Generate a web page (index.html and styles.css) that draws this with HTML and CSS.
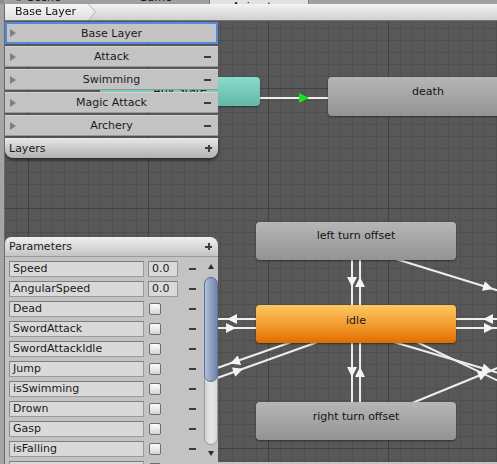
FILE: index.html
```html
<!DOCTYPE html>
<html>
<head>
<meta charset="utf-8">
<title>Animator</title>
<link rel="stylesheet" href="styles.css">
</head>
<body>
<div class="window">
  <div class="tabs">
    <div class="tab tab-scene"><span class="tab-ico">#</span>Scene</div>
    <div class="tab tab-game">Game</div>
    <div class="tab tab-active"><span class="tab-ico">&#8734;</span>Animator</div>
  </div>
  <div class="main">
    <div class="frame-left"></div>
    <div class="content">
      <div class="toolbar">
        <div class="crumb-wrap"><div class="crumb">Base Layer</div></div>
      </div>
      <div class="canvas">
        <svg class="edges" viewBox="5 21 492 443" width="492" height="443">
          <defs>
            <marker id="aw" markerUnits="userSpaceOnUse" markerWidth="11" markerHeight="10" refX="10" refY="5" orient="auto" viewBox="0 0 10 10">
              <path d="M0,0 L10,5 L0,10 Z" fill="#f4f4f4"/>
            </marker>
            <marker id="ag" markerUnits="userSpaceOnUse" markerWidth="11" markerHeight="10" refX="10" refY="5" orient="auto" viewBox="0 0 10 10">
              <path d="M0,0 L10,5 L0,10 Z" fill="#14e614"/>
            </marker>
          </defs>
          <g stroke="#ededed" stroke-width="2" fill="none">
            <line x1="240" y1="98" x2="309" y2="98" marker-end="url(#ag)"/>
            <line x1="309" y1="98" x2="340" y2="98"/>

            <line x1="352" y1="240" x2="352" y2="287" marker-end="url(#aw)"/>
            <line x1="352" y1="287" x2="352" y2="377" marker-end="url(#aw)"/>
            <line x1="352" y1="377" x2="352" y2="420"/>
            <line x1="360" y1="420" x2="360" y2="367" marker-end="url(#aw)"/>
            <line x1="360" y1="367" x2="360" y2="277" marker-end="url(#aw)"/>
            <line x1="360" y1="277" x2="360" y2="240"/>

            <line x1="300" y1="319" x2="227" y2="319" marker-end="url(#aw)"/>
            <line x1="227" y1="319" x2="150" y2="319"/>
            <line x1="150" y1="328" x2="236" y2="328" marker-end="url(#aw)"/>
            <line x1="236" y1="328" x2="300" y2="328"/>

            <line x1="520" y1="319" x2="483" y2="319" marker-end="url(#aw)"/>
            <line x1="483" y1="319" x2="400" y2="319"/>
            <line x1="400" y1="328" x2="494" y2="328" marker-end="url(#aw)"/>
            <line x1="494" y1="328" x2="520" y2="328"/>

            <line x1="370" y1="251" x2="493" y2="289" marker-end="url(#aw)"/>
            <line x1="493" y1="289" x2="530" y2="300"/>

            <line x1="330" y1="328.5" x2="230" y2="363.5" marker-end="url(#aw)"/>
            <line x1="230" y1="363.5" x2="150" y2="391.5"/>
            <line x1="150" y1="402" x2="243" y2="368.7" marker-end="url(#aw)"/>
            <line x1="243" y1="368.7" x2="340" y2="334"/>

            <line x1="380" y1="338" x2="492" y2="371" marker-end="url(#aw)"/>
            <line x1="492" y1="371" x2="530" y2="382"/>
            <line x1="400" y1="334" x2="530" y2="396"/>
            <line x1="400" y1="408" x2="488" y2="372" marker-end="url(#aw)"/>
            <line x1="488" y1="372" x2="530" y2="354"/>
          </g>
        </svg>

        <div class="node node-teal n-any">Any State</div>
        <div class="node node-gray n-death">death</div>
        <div class="node node-gray n-left">left turn offset</div>
        <div class="node node-orange n-idle">idle</div>
        <div class="node node-gray n-right">right turn offset</div>

        <div class="layers">
          <div class="lrow selected"><span class="tri"></span><span class="lname">Base Layer</span><span class="lact"></span></div>
          <div class="lrow"><span class="tri"></span><span class="lname">Attack</span><span class="lact"><span class="minus"></span></span></div>
          <div class="lrow"><span class="tri"></span><span class="lname">Swimming</span><span class="lact"><span class="minus"></span></span></div>
          <div class="lrow"><span class="tri"></span><span class="lname">Magic Attack</span><span class="lact"><span class="minus"></span></span></div>
          <div class="lrow"><span class="tri"></span><span class="lname">Archery</span><span class="lact"><span class="minus"></span></span></div>
          <div class="lfoot"><span>Layers</span><span class="plus"></span></div>
        </div>

        <div class="params">
          <div class="phead"><span>Parameters</span><span class="plus"></span></div>
          <div class="pbody">
            <div class="plist">
              <div class="prow"><div class="pname">Speed</div><div class="pcell"><div class="pval">0.0</div></div><span class="minus"></span></div>
              <div class="prow"><div class="pname">AngularSpeed</div><div class="pcell"><div class="pval">0.0</div></div><span class="minus"></span></div>
              <div class="prow"><div class="pname">Dead</div><div class="pcell"><div class="chk"></div></div><span class="minus"></span></div>
              <div class="prow"><div class="pname">SwordAttack</div><div class="pcell"><div class="chk"></div></div><span class="minus"></span></div>
              <div class="prow"><div class="pname">SwordAttackIdle</div><div class="pcell"><div class="chk"></div></div><span class="minus"></span></div>
              <div class="prow"><div class="pname">Jump</div><div class="pcell"><div class="chk"></div></div><span class="minus"></span></div>
              <div class="prow"><div class="pname">isSwimming</div><div class="pcell"><div class="chk"></div></div><span class="minus"></span></div>
              <div class="prow"><div class="pname">Drown</div><div class="pcell"><div class="chk"></div></div><span class="minus"></span></div>
              <div class="prow"><div class="pname">Gasp</div><div class="pcell"><div class="chk"></div></div><span class="minus"></span></div>
              <div class="prow"><div class="pname">isFalling</div><div class="pcell"><div class="chk"></div></div><span class="minus"></span></div>
              <div class="prow"><div class="pname">isLanding</div><div class="pcell"><div class="chk"></div></div><span class="minus"></span></div>
            </div>
            <div class="scroll">
              <div class="sarrow up"></div>
              <div class="strack"><div class="sthumb"></div></div>
              <div class="sarrow down"></div>
            </div>
          </div>
        </div>
      </div>
    </div>
  </div>
</div>
</body>
</html>
```

FILE: styles.css
```css
html, body {
  margin: 0;
  padding: 0;
  width: 497px;
  height: 464px;
  overflow: hidden;
}
body {
  font-family: "DejaVu Sans", Verdana, sans-serif;
  font-size: 11px;
  color: #1a1a1a;
  background: #a3a3a3;
}
.window {
  display: flex;
  flex-direction: column;
  width: 497px;
  height: 464px;
  overflow: hidden;
}

/* top tab strip (mostly cut off by the window edge) */
.tabs {
  height: 4px;
  flex: none;
  overflow: hidden;
  display: flex;
  background: #a0a0a0;
  border-left: 4px solid #8c8c8c;
}
.tab {
  line-height: 13px;
  margin-top: -9px;
  white-space: nowrap;
  color: #111;
}
.tab-ico { margin-right: 3px; }
.tab-scene { width: 110px; padding-left: 11px; }
.tab-game { width: 70px; padding-left: 14px; }
.tab-active {
  width: 88px;
  padding: 9px 0 0 10px;
  background: #e2e2e2;
  border-left: 1px solid #7d7d7d;
  border-right: 1px solid #7d7d7d;
}

.main {
  flex: 1;
  display: flex;
  min-height: 0;
}
.frame-left {
  width: 4px;
  flex: none;
  background: #a5a5a5;
  border-right: 1px solid #6a6a6a;
}
.content {
  flex: 1;
  display: flex;
  flex-direction: column;
  min-width: 0;
}

/* toolbar + breadcrumb */
.toolbar {
  height: 17px;
  flex: none;
  box-sizing: border-box;
  background: linear-gradient(#f4f4f4, #d0d0d0);
  border-bottom: 1px solid #777;
  display: flex;
}
.crumb-wrap {
  filter: drop-shadow(1px 0 0 #b0b0b0);
}
.crumb {
  width: 80px;
  height: 16px;
  padding-left: 10px;
  line-height: 16px;
  background: linear-gradient(#f6f6f6, #e0e0e0);
  clip-path: polygon(0 0, 83px 0, 90px 50%, 83px 100%, 0 100%);
  color: #111;
}

/* graph canvas */
.canvas {
  flex: 1;
  position: relative;
  overflow: hidden;
  display: flex;
  flex-direction: column;
  padding-top: 1px;
  background-color: #585858;
  background-image:
    linear-gradient(#c4c4c4, #c4c4c4),
    linear-gradient(to right, #414141 1px, transparent 1px),
    linear-gradient(to bottom, #414141 1px, transparent 1px),
    linear-gradient(to right, #4f4f4f 1px, transparent 1px),
    linear-gradient(to bottom, #4f4f4f 1px, transparent 1px);
  background-repeat: no-repeat, repeat, repeat, repeat, repeat;
  background-size: 100% 2px, 120px 120px, 120px 120px, 12px 12px, 12px 12px;
  background-position: 0 100%, 23px 0, 0 67px, 11px 0, 0 7px;
}
.edges {
  position: absolute;
  left: 0;
  top: 0;
}

/* state nodes */
.node {
  position: absolute;
  box-sizing: border-box;
  width: 200px;
  height: 38px;
  padding-top: 7px;
  line-height: 14px;
  text-align: center;
  border-radius: 4px;
  color: #141414;
  box-shadow: 0 1px 2px rgba(0, 0, 0, 0.45);
}
.node-gray { background: linear-gradient(#b6b6b6, #939393); }
.node-orange { background: linear-gradient(#fec860, #f29a2c 55%, #e26d00); }
.node-teal {
  background: linear-gradient(#8adbcb, #61b9a8);
  width: 160px;
  height: 29px;
  padding-top: 7px;
}
.n-any { left: 95px; top: 56px; }
.n-death { left: 323px; top: 56px; height: 39px; padding-top: 8px; }
.n-left { left: 251px; top: 201px; }
.n-idle { left: 251px; top: 284px; padding-top: 9px; }
.n-right { left: 251px; top: 381px; padding-top: 8px; }

/* layers panel */
.layers {
  position: relative;
  z-index: 2;
  width: 213px;
  flex: none;
  display: flex;
  flex-direction: column;
  gap: 2px;
}
.lrow {
  height: 21px;
  box-sizing: border-box;
  display: grid;
  grid-template-columns: 20px 1fr 20px;
  align-items: center;
  background: #c3c3c3;
  border-top: 1px solid #d4d4d4;
  border-bottom: 1px solid #979797;
}
.lrow.selected {
  height: 22px;
  border: 2px solid #5289dc;
}
.lrow.selected .tri { margin-left: 3px; }
.tri {
  width: 0;
  height: 0;
  margin-left: 5px;
  border-left: 6px solid #808080;
  border-top: 4px solid transparent;
  border-bottom: 4px solid transparent;
}
.lname { text-align: center; }
.lact { display: flex; justify-content: flex-start; }
.minus {
  display: block;
  width: 7px;
  height: 2px;
  background: #3a3a3a;
}
.lact .minus { margin-left: 6px; }
.plus {
  display: block;
  width: 7px;
  height: 7px;
  background:
    linear-gradient(#3e3e3e, #3e3e3e) center / 7px 2px no-repeat,
    linear-gradient(#3e3e3e, #3e3e3e) center / 2px 7px no-repeat;
}
.lfoot {
  height: 20px;
  box-sizing: border-box;
  display: flex;
  align-items: center;
  justify-content: space-between;
  padding: 0 6px 0 4px;
  background: linear-gradient(#e9e9e9, #c6c6c6 60%, #b2b2b2);
  border-radius: 0 0 8px 8px;
  box-shadow: 0 2px 3px rgba(0, 0, 0, 0.55);
}

/* parameters panel */
.params {
  position: relative;
  z-index: 2;
  width: 213px;
  flex: 1;
  margin-top: 79px;
  display: flex;
  flex-direction: column;
  min-height: 0;
}
.phead {
  height: 20px;
  flex: none;
  box-sizing: border-box;
  display: flex;
  align-items: center;
  justify-content: space-between;
  padding: 0 6px 0 4px;
  background: linear-gradient(#f0f0f0, #d6d6d6 60%, #c4c4c4);
  border-radius: 6px 8px 0 0;
  border-bottom: 1px solid #9a9a9a;
}
.pbody {
  flex: 1;
  display: flex;
  background: #c3c3c3;
  padding: 4px 0 0 4px;
  overflow: hidden;
  min-height: 0;
}
.plist {
  width: 189px;
  display: flex;
  flex-direction: column;
  gap: 4px;
}
.prow {
  height: 16px;
  flex: none;
  display: grid;
  grid-template-columns: 135px 41px 8px;
  column-gap: 4px;
  align-items: center;
}
.prow .minus { margin-left: -4px; }
.pname, .pval {
  height: 16px;
  box-sizing: border-box;
  padding-left: 3px;
  line-height: 14px;
  background: #d9d9d9;
  border: 1px solid #999;
  border-top-color: #7e7e7e;
  border-left-color: #8a8a8a;
  white-space: nowrap;
}
.pval { width: 30px; }
.chk {
  width: 12px;
  height: 12px;
  margin-left: 1px;
  box-sizing: border-box;
  border: 1px solid #6d6d6d;
  border-radius: 2px;
  background: linear-gradient(#fefefe, #d4d4d4);
}

/* scrollbar */
.scroll {
  width: 14px;
  margin-left: 6px;
  margin-top: -4px;
  display: flex;
  flex-direction: column;
  align-items: center;
}
.sarrow {
  width: 0;
  height: 0;
  border-left: 3.5px solid transparent;
  border-right: 3.5px solid transparent;
}
.sarrow.up {
  margin-top: 7px;
  border-bottom: 5px solid #2e2e2e;
}
.sarrow.down {
  margin-top: 6px;
  border-top: 5px solid #2e2e2e;
}
.strack {
  margin-top: 8px;
  width: 14px;
  height: 168px;
  box-sizing: border-box;
  border: 1px solid #9a9a9a;
  border-radius: 7px;
  background: linear-gradient(to right, #d2d2d2, #e8e8e8 50%, #d8d8d8);
  display: flex;
  flex-direction: column;
}
.sthumb {
  margin: -1px;
  height: 103px;
  border: 1px solid #5f7297;
  border-radius: 7px;
  background: linear-gradient(to right, #b3c0d9, #91a3c4 45%, #7287ae);
}
```
